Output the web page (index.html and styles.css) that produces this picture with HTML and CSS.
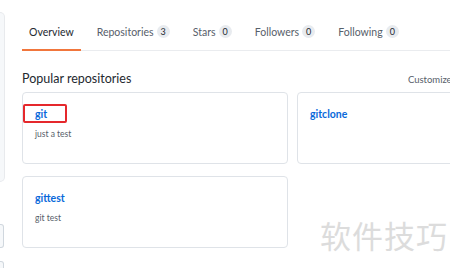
FILE: index.html
```html
<!DOCTYPE html>
<html lang="en">
<head>
    <meta charset="UTF-8">
    <meta name="viewport" content="width=device-width, initial-scale=1.0">
    <title>Profile Overview</title>
    <link rel="stylesheet" href="styles.css">
</head>
<body>
    <div class="page">
        <div class="sidebar">
            <div class="side-panel"></div>
            <div class="side-button"></div>
            <div class="side-button last"></div>
        </div>
        <div class="main">
            <nav class="tabs">
                <a class="tab active" href="#">Overview</a>
                <a class="tab" href="#">Repositories <span class="count">3</span></a>
                <a class="tab" href="#">Stars <span class="count">0</span></a>
                <a class="tab" href="#">Followers <span class="count">0</span></a>
                <a class="tab" href="#">Following <span class="count">0</span></a>
            </nav>
            <div class="pinned-head">
                <h2>Popular repositories</h2>
                <a class="customize" href="#">Customize your pins</a>
            </div>
            <div class="pinned">
                <div class="repo">
                    <a class="repo-name" href="#">git</a>
                    <p class="repo-desc">just a test</p>
                    <span class="highlight"></span>
                </div>
                <div class="repo">
                    <a class="repo-name" href="#">gitclone</a>
                </div>
                <div class="repo">
                    <a class="repo-name" href="#">gittest</a>
                    <p class="repo-desc">git test</p>
                </div>
            </div>
        </div>
    </div>
    <div class="watermark">软件技巧</div>
</body>
</html>
```
FILE: styles.css
```css
body {
    margin: 0;
    font-family: Lato, "Open Sans", sans-serif;
    background-color: #fff;
    color: #24292f;
    overflow: hidden;
}
.page {
    display: flex;
    width: 620px;
}
.sidebar {
    width: 6px;
    flex-shrink: 0;
    display: flex;
    flex-direction: column;
}
.side-panel {
    margin-top: 12px;
    height: 168px;
    background: #f6f8fa;
    border: 1px solid #e8eaed;
    border-left: none;
    border-radius: 0 5px 5px 0;
    width: 4px;
}
.side-button {
    margin-top: 42px;
    height: 22px;
    width: 3px;
    border: 1px solid #d0d7de;
    border-left: none;
    border-radius: 0 3px 3px 0;
    background: #f6f8fa;
}
.side-button.last {
    margin-top: 13px;
}
.main {
    margin-left: 16px;
    flex: 1;
}
.tabs {
    display: flex;
    height: 50px;
    border-bottom: 1px solid #eaecef;
}
.tab {
    display: flex;
    align-items: center;
    padding: 0 7px;
    margin-right: 9px;
    margin-top: 14px;
    font-size: 10.5px;
    color: #57606a;
    text-decoration: none;
    border-bottom: 2px solid transparent;
    margin-bottom: -1px;
}
.tab.active {
    color: #24292f;
    border-bottom-color: #f1763c;
}
.count {
    display: inline-block;
    margin-left: 3px;
    padding: 0 4px;
    font-size: 9px;
    line-height: 13px;
    border-radius: 7px;
    background: #e8ebef;
    color: #24292f;
}
.pinned-head {
    display: flex;
    align-items: baseline;
    justify-content: space-between;
    margin-top: 20px;
    width: 470px;
}
.pinned-head h2 {
    margin: 0;
    font-size: 12.5px;
    font-weight: normal;
}
.customize {
    font-size: 9.5px;
    color: #57606a;
    text-decoration: none;
}
.pinned {
    display: grid;
    grid-template-columns: 266px 266px;
    column-gap: 9px;
    row-gap: 12px;
    margin-top: 6px;
}
.repo {
    position: relative;
    padding: 9px 12px 0;
    border: 1px solid #dfe3e8;
    border-radius: 4px;
    box-sizing: border-box;
    height: 72px;
}
.repo-name {
    font-size: 10.5px;
    font-weight: bold;
    color: #0969da;
    text-decoration: none;
}
.repo-desc {
    margin: 8px 0 0;
    font-size: 8.5px;
    color: #57606a;
}
.highlight {
    position: absolute;
    left: 0;
    top: 11px;
    width: 40px;
    height: 15px;
    border: 2px solid #e5282c;
    border-radius: 2px;
}
.watermark {
    position: absolute;
    left: 320px;
    top: 212px;
    font-family: "Noto Sans CJK SC", sans-serif;
    font-size: 31px;
    letter-spacing: 1px;
    color: #dcdcdc;
}
```
